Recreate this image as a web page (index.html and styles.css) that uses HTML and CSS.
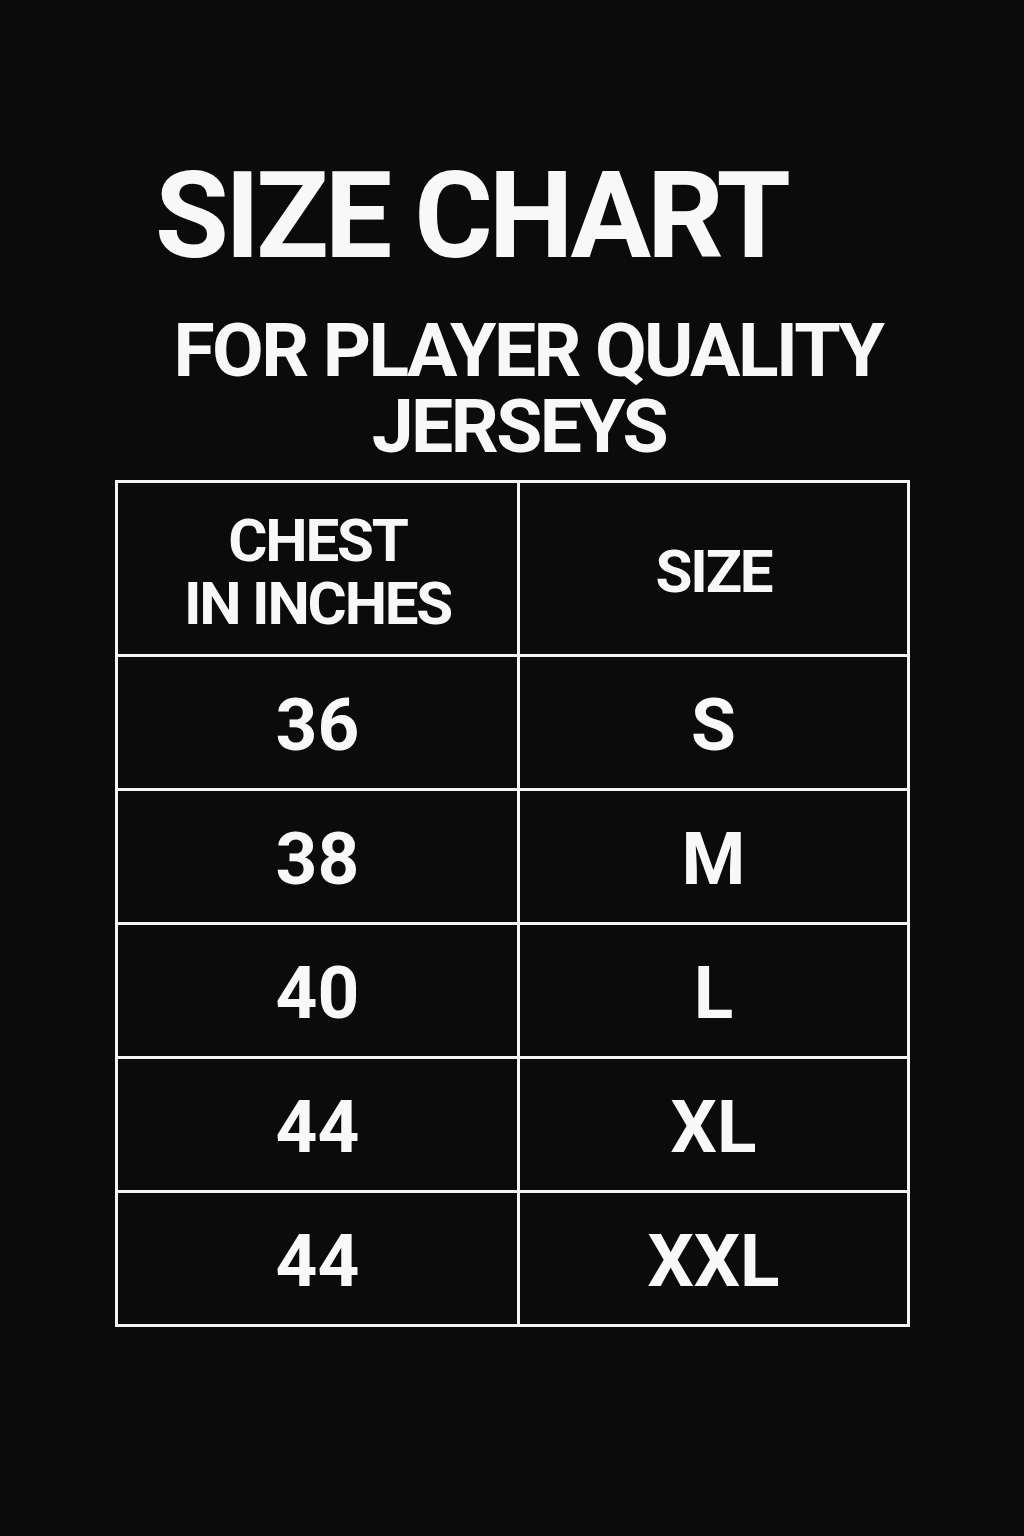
FILE: index.html
```html
<!DOCTYPE html>
<html lang="en">
<head>
<meta charset="utf-8">
<title>Size Chart</title>
<link rel="stylesheet" href="styles.css">
</head>
<body>
<main class="page">
  <h1 class="title">SIZE CHART</h1>
  <h2 class="subtitle"><span class="line">FOR PLAYER QUALITY</span><span class="line second">JERSEYS</span></h2>
  <div class="chart">
    <div class="cell head"><span class="line">CHEST</span><span class="line">IN INCHES</span></div>
    <div class="cell head">SIZE</div>
    <div class="cell">36</div><div class="cell">S</div>
    <div class="cell">38</div><div class="cell">M</div>
    <div class="cell">40</div><div class="cell">L</div>
    <div class="cell">44</div><div class="cell">XL</div>
    <div class="cell">44</div><div class="cell">XXL</div>
  </div>
</main>
</body>
</html>
```

FILE: styles.css
```css
html, body {
  margin: 0;
  padding: 0;
  background: #0b0b0b;
}
body {
  width: 1024px;
  height: 1536px;
  overflow: hidden;
  font-family: Roboto, "Liberation Sans", Arial, sans-serif;
  color: #f8f8f8;
}
.page {
  padding-top: 156px;
  display: flex;
  flex-direction: column;
}
.title {
  margin: 0 0 0 155px;
  font-size: 120px;
  line-height: 120px;
  font-weight: 700;
  letter-spacing: -4px;
}
.subtitle {
  margin: 36px 0 0 0;
  display: flex;
  flex-direction: column;
  align-items: center;
  padding-left: 32px;
  font-size: 75px;
  line-height: 76px;
  font-weight: 700;
  letter-spacing: -2.6px;
}
.subtitle .second {
  margin-right: 18px;
}
.line {
  display: block;
}
.chart {
  margin: 16px 0 0 115px;
  width: 789px;
  display: grid;
  grid-template-columns: 399px 387px;
  grid-auto-rows: 131px;
  grid-template-rows: 171px;
  gap: 3px;
  padding: 3px;
  background: #f4f4f4;
}
.cell {
  background: #0b0b0b;
  display: flex;
  flex-direction: column;
  align-items: center;
  justify-content: center;
  text-align: center;
  font-weight: 700;
  font-size: 73px;
  line-height: 1;
  padding-top: 6px;
  box-sizing: border-box;
}
.head {
  font-size: 60px;
  line-height: 63px;
  letter-spacing: -2.2px;
  padding-top: 6px;
}
```
